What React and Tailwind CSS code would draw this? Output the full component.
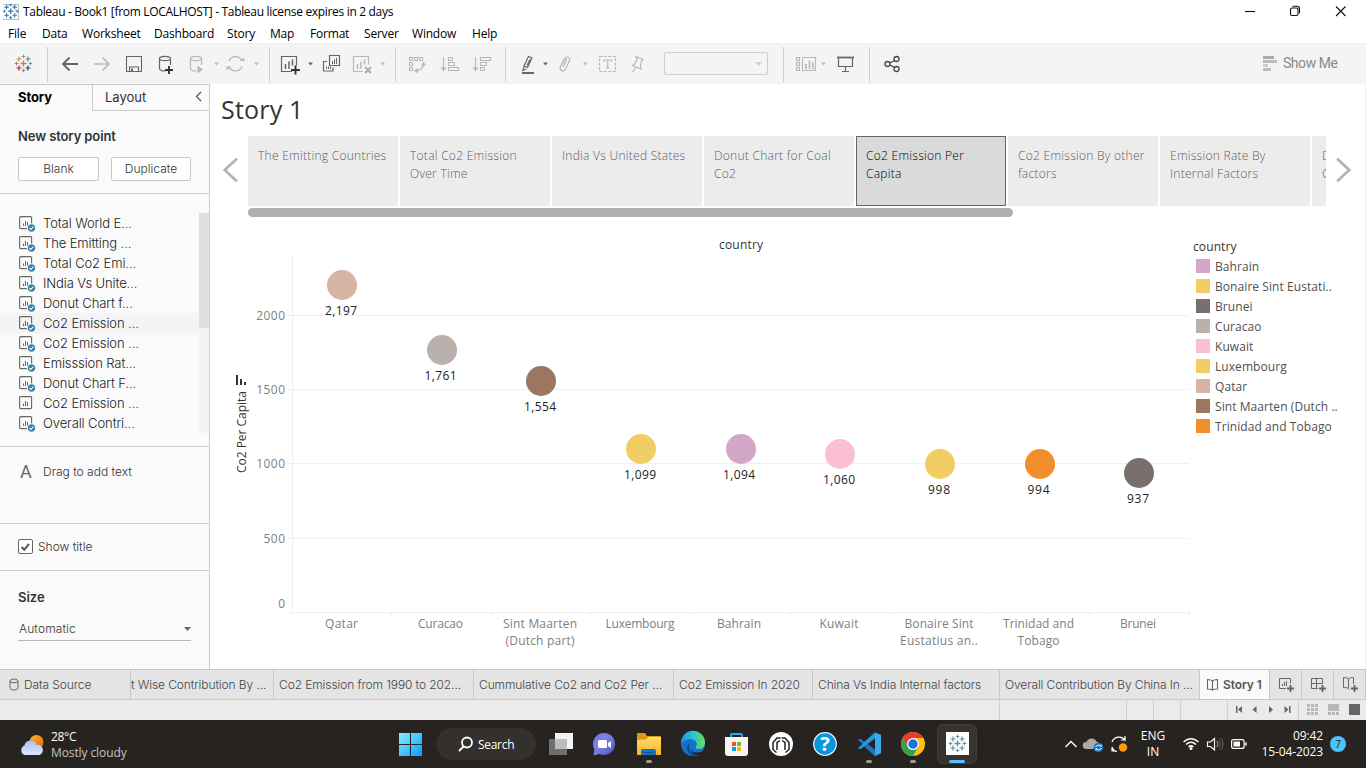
import React from "react";

const G = "#666666";
const L = "#b8b8b8";

/* Toolbar icons share one coordinate system; each cell shows its own slice of it. */
function Cell({ x, to, children }) {
  return (
    <svg className="shrink-0" width={to - x} height="41" viewBox={`${x} 43 ${to - x} 41`} fill="none">
      {children}
    </svg>
  );
}
const Caret = ({ x, c = L }) => <path d={`M${x - 2.5} 62.5h5l-2.5 3z`} fill={c} />;
const Divider = ({ x }) => <path d={`M${x + 0.5} 47v35`} stroke="#cfcfcf" />;

const LOGO = [
  [23.5, 63.5, 3, "#e8762c", 1.4],
  [19, 59, 2.5, "#eb912c", 1.2],
  [28, 59, 2.5, "#59879b", 1.2],
  [19, 68, 2.5, "#c72037", 1.2],
  [28, 68, 2.5, "#1f457e", 1.2],
  [23.5, 56.5, 1.8, "#7099a6", 1],
  [23.5, 70.5, 1.8, "#7b86b0", 1],
  [16.5, 63.5, 1.8, "#7b86b0", 1],
  [30.5, 63.5, 1.8, "#7099a6", 1],
];
function TableauMark({ mono }) {
  return LOGO.map(([x, y, r, c, w], i) => (
    <path key={i} d={`M${x - r} ${y}h${2 * r}M${x} ${y - r}v${2 * r}`} stroke={mono || c} strokeWidth={w} />
  ));
}

function TitleBar() {
  return (
    <div className="flex h-[23px] items-center bg-white pl-[3px] text-[12px] text-black">
      <svg width="16" height="16" viewBox="0 0 16 16">
        <path d="M0 .5h15.500v15H0" fill="#fff" stroke="#bdbdbd" />
        <g transform="translate(-13.700 -50.600) scale(.91)"><TableauMark mono="#2f7ea8" /></g>
      </svg>
      <span className="ml-1 w-[1200px] whitespace-nowrap font-['Open_Sans',sans-serif] tracking-[-0.32px]">
        Tableau - Book1 [from LOCALHOST] - Tableau license expires in 2 days
      </span>
      <svg className="ml-[22px] shrink-0" width="105" height="20" viewBox="1245 1 105 20" fill="none" stroke="#111" strokeWidth="1.1">
        <path d="M1245 10.500h10" />
        <rect x="1290.500" y="7" width="7.500" height="7.500" rx="1.500" />
        <path d="M1292.500 5.200h4.800q2.200 0 2.200 2.200v4.800M1336 5.500l9.500 9.500M1345.500 5.500l-9.500 9.500" />
      </svg>
    </div>
  );
}

const MENU = [
  ["File", "w-[34px]"], ["Data", "w-[40px]"], ["Worksheet", "w-[72px]"], ["Dashboard", "w-[73px]"], ["Story", "w-[43px]"],
  ["Map", "w-[40px]"], ["Format", "w-[54px]"], ["Server", "w-[48px]"], ["Window", "w-[60px]"], ["Help", "w-[40px]"],
];
function MenuBar() {
  return (
    <div className="flex h-5 items-center bg-white pt-0.5 pl-2 font-['Open_Sans',sans-serif] text-[12px] tracking-[-0.2px] text-black">
      {MENU.map(([m, w]) => <span key={m} className={`${w} shrink-0 whitespace-nowrap`}>{m}</span>)}
    </div>
  );
}

const Cyl = ({ x, c }) => (
  <path d={`M${x} 58.500v10q0 2.500 6 2.500M${x + 11} 65v-6.500M${x} 58.500q0-2.200 5.500-2.200t5.500 2.200q0 2.200-5.500 2.200t-5.500-2.200`} stroke={c} strokeWidth="1.200" />
);

function Toolbar() {
  return (
    <div className="flex h-[41px] border-t border-[#efefef] bg-[#f4f4f4]">
      <div className="-mt-px flex">
        <Cell x={0} to={47}><TableauMark /></Cell>
        <Cell x={47} to={54}><Divider x={47} /></Cell>
        <Cell x={54} to={86}><path d="M78 64H63M69.500 57.500L63 64l6.500 6.500" stroke={G} strokeWidth="1.800" /></Cell>
        <Cell x={86} to={118}><path d="M94 64h15M102.500 57.500L109 64l-6.500 6.500" stroke={L} strokeWidth="1.600" /></Cell>
        <Cell x={118} to={150}>
          <path d="M126.500 56.500h15v15h-15zM129.500 71.500v-4.500h9v4.500" stroke={G} strokeWidth="1.100" />
          <path d="M131 68.500h2v3h-2z" fill={G} />
        </Cell>
        <Cell x={150} to={182}><Cyl x={159.500} c={G} /><path d="M165 70h8M169 66v8" stroke="#333" strokeWidth="1.900" /></Cell>
        <Cell x={182} to={210}><Cyl x={190.500} c={L} /><path d="M197.500 65.500v8l5.500-4z" fill={L} /></Cell>
        <Cell x={210} to={224}><Caret x={216.500} /></Cell>
        <Cell x={224} to={250}>
          <path d="M229 61a7 7 0 0 1 13 0M242 66.500a7 7 0 0 1-13 0" stroke={L} strokeWidth="1.400" />
          <path d="M239.500 61h5v-3.500zM226.500 66.500h5l-5 4z" fill={L} />
        </Cell>
        <Cell x={250} to={264}><Caret x={256.500} /></Cell>
        <Cell x={264} to={275}><Divider x={269} /></Cell>
        <Cell x={275} to={305}>
          <path d="M292 71.500h-10.500v-15h15v9" stroke={G} strokeWidth="1.200" />
          <path d="M285.500 64v5M289 61.500v7.500M292.500 59.500v6" stroke={G} strokeWidth="1.500" />
          <path d="M291 70h9M295.500 65.500v9" stroke="#333" strokeWidth="1.900" />
        </Cell>
        <Cell x={305} to={316}><Caret x={310.500} c={G} /></Cell>
        <Cell x={316} to={347}>
          <path d="M329.500 55.500h10v10h-10zM327 61.500h-3.500v9.500h9.500v-3.500" stroke={G} strokeWidth="1.200" />
          <path d="M332.500 61v3M334.500 59.500v4.500M336.500 58v6M326.500 66.500v2.500M328.500 66.500v2.500M330.500 66.500v2.500" stroke={G} />
        </Cell>
        <Cell x={347} to={376}>
          <path d="M363 71.500h-9.500v-15h15v8" stroke={L} strokeWidth="1.200" />
          <path d="M357.500 64v5M361 61.500v7.500M364.500 59.500v5" stroke={L} strokeWidth="1.500" />
          <path d="M365 67l6 6M371 67l-6 6" stroke="#aaa" strokeWidth="1.900" />
        </Cell>
        <Cell x={376} to={390}><Caret x={382.500} /></Cell>
        <Cell x={390} to={402}><Divider x={395} /></Cell>
        <Cell x={402} to={433}>
          <g stroke={L} strokeWidth="1.100"><path d="M409.500 57.500h3v3h-3zM414.500 57.500h3v3h-3zM419.500 57.500h3v3h-3zM409.500 62.500h3v3h-3zM409.500 67.500h3v3h-3z" /><path d="M416 71q7-1 7.500-7" strokeWidth="1.400" /></g>
          <path d="M423.500 61.500l2.500 4h-5zM414 70.700l4-2.700v5.400z" fill={L} />
        </Cell>
        <Cell x={433} to={466}>
          <path d="M443.500 57v13M448.500 57.500h4v3h-4zM448.500 62.500h6v3h-6zM448.500 67.500h10v3h-10z" stroke={L} strokeWidth="1.100" /><path d="M440.500 67.500h6l-3 4z" fill={L} />
        </Cell>
        <Cell x={466} to={499}>
          <path d="M475.500 57v13M480.500 57.500h10v3h-10zM480.500 62.500h6v3h-6zM480.500 67.500h4v3h-4z" stroke={L} strokeWidth="1.100" /><path d="M472.500 67.500h6l-3 4z" fill={L} />
        </Cell>
        <Cell x={499} to={514}><Divider x={505} /></Cell>
        <Cell x={514} to={540}>
          <path d="M528.500 56.500l3.500 1.500-4.500 9.500-3.500-1.500zM524 66.500l-1.200 4 3.500-1.500M530 59.500l-3 6" stroke={G} strokeWidth="1.200" />
          <path d="M522 72h12v2h-12z" fill={G} />
        </Cell>
        <Cell x={540} to={552}><Caret x={545.500} c={G} /></Cell>
        <Cell x={552} to={579}>
          <path d="M562 64.500l3-6q1-2 3-1.300 2.500 1 1.500 3.300l-4 8.500q-1.300 2.600-3.800 1.600-2.400-1-1.400-3.600l3.700-7.500q.7-1.200 1.700-.7t.5 1.700l-3.200 6.500" stroke={L} strokeWidth="1.200" />
        </Cell>
        <Cell x={579} to={592}><Caret x={585.500} /></Cell>
        <Cell x={592} to={624}>
          <path d="M599.500 56.500h16v15h-16z" stroke={L} strokeDasharray="3 1.400" strokeWidth="1.200" />
          <path d="M604 62v-2h7.500v2M607.700 60v8M605.700 68h4" stroke={L} strokeWidth="1.200" />
        </Cell>
        <Cell x={624} to={656}>
          <path d="M636 56.500l7 3-1.500 1.500-1 5 .5 3-8.500-3.500 2.500-2 2-4zM636.500 67l-4 5" stroke={L} strokeWidth="1.200" />
        </Cell>
      </div>
      <div className="mt-2 ml-2 flex h-[23px] w-[104px] shrink-0 items-center justify-end rounded-xs border border-[#cfcfcf] pr-[5px]">
        <svg width="7" height="4" viewBox="0 0 7 4"><path d="M0 0h7L3.500 4z" fill="#cfcfcf" /></svg>
      </div>
      <div className="-mt-px ml-2 flex">
        <Cell x={776} to={790}><Divider x={783} /></Cell>
        <Cell x={790} to={819}>
          <path d="M796.500 57.500h3v3h-3zM796.500 62.500h3v3h-3zM796.500 67.500h3v3h-3zM802.500 57.500h13v13h-13z" stroke={L} strokeWidth="1.100" />
          <path d="M806 64v5M809.500 60.500v8.500M813 62.500v6.500" stroke={L} strokeWidth="1.700" />
        </Cell>
        <Cell x={819} to={831}><Caret x={823.500} /></Cell>
        <Cell x={831} to={862}>
          <path d="M837 57.500h17" stroke={G} strokeWidth="1.800" /><path d="M838.500 58v8.500h14V58M845.500 67v4.500M842 71.500h7" stroke={G} strokeWidth="1.200" />
        </Cell>
        <Cell x={862} to={877}><Divider x={869} /></Cell>
        <Cell x={877} to={908}>
          <g stroke="#444" strokeWidth="1.300"><circle cx="887.500" cy="64" r="2.500" /><circle cx="896.500" cy="59" r="2.500" /><circle cx="896.500" cy="69" r="2.500" /><path d="M890 63l4.500-2.500M890 65l4.500 2.500" /></g>
        </Cell>
      </div>
      <div className="mb-px ml-auto flex items-center pr-[28px] font-['Roboto',sans-serif] text-[14px] tracking-[-0.45px] text-[#8a8a8a]">
        <svg className="mr-1.5" width="14" height="15"><path d="M0 0h11v3H0z" fill="#aaa" /><path d="M0 4h14v3H0zM0 12h8v3H0z" fill="#bcbcbc" /><path d="M0 8h5v3H0z" fill="#d0d0d0" /></svg>
        <span className="w-[55px] whitespace-nowrap">Show Me</span>
      </div>
    </div>
  );
}

function SheetIcon({ done }) {
  return (
    <svg className="mr-2 shrink-0" width="17" height="17" fill="none">
      <rect x=".6" y="1.600" width="12" height="12" rx="1" stroke="#666" strokeWidth="1.100" />
      <path d="M4.500 8.500V11M6.500 6v5M8.500 7v4" stroke="#666" />
      {done && <><circle cx="12.500" cy="13" r="4.200" fill="#3580a3" stroke="#fafafa" /><path d="M10.500 13l1.500 1.500 2.500-3" stroke="#fff" strokeWidth="1.100" /></>}
    </svg>
  );
}
const SHEETS = [
  "Total World E...", "The Emitting ...", "Total Co2 Emi...", "INdia Vs Unite...", "Donut Chart f...", "Co2 Emission ...",
  "Co2 Emission ...", "Emisssion Rat...", "Donut Chart F...", "Co2 Emission ...", "Overall Contri...",
];

function SidePanel() {
  return (
    <aside className="flex w-[210px] shrink-0 flex-col border-t border-r border-[#cccccc] bg-[#fafafa] font-['Inter',sans-serif] text-[#4a4a4a]">
      <div className="flex h-[26px] shrink-0">
        <div className="w-[92px] pt-[2px] pl-[18px] text-[13px] leading-[21px] font-bold tracking-[-0.1px] text-black">Story</div>
        <div className="flex flex-1 items-start border-b border-l border-[#cccccc] pt-[2px] pl-3 text-[13px] leading-[21px] text-[#333]">
          Layout
          <svg className="mt-1 mr-[7px] ml-auto" width="7" height="11"><path d="M6 1L1.500 5.500 6 10" fill="none" stroke="#555" strokeWidth="1.200" /></svg>
        </div>
      </div>
      <div className="h-[83px] shrink-0 border-b border-[#cccccc] px-[18px] pt-[15px]">
        <div className="text-[13px] leading-5 font-semibold tracking-[-0.1px] text-[#333]">New story point</div>
        <div className="mt-[11px] flex gap-3 text-center text-[12px] leading-[21px] font-light text-[#333]">
          <div className="h-6 w-[81px] rounded-xs border border-[#c8c8c8] bg-white">Blank</div>
          <div className="h-6 w-20 rounded-xs border border-[#c8c8c8] bg-white">Duplicate</div>
        </div>
      </div>
      <div className="flex h-[253px] shrink-0 border-b border-[#cccccc] pt-[19px]">
        <div className="w-[199px] text-[13px] leading-5 font-light tracking-[-0.1px] text-[#222]">
          {SHEETS.map((s, i) => (
            <div key={i} className={`flex h-5 items-center pl-[19px] ${i === 5 ? "bg-[#f4f4f4]" : ""}`}>
              <SheetIcon done={i !== 9} /><span className="-ml-px whitespace-nowrap">{s}</span>
            </div>
          ))}
        </div>
        <div className="h-[220px] w-[10px] bg-[#f4f4f4]"><div className="h-[115px] bg-[#e0e0e0]" /></div>
      </div>
      <div className="flex h-[77px] shrink-0 border-b border-[#cccccc] pt-[15px] pl-5 leading-5">
        <span className="w-[23px] font-['Roboto',sans-serif] text-[18px] text-[#666]">A</span>
        <span className="text-[12px] font-light text-[#333]">Drag to add text</span>
      </div>
      <div className="flex h-[47px] shrink-0 items-center border-b border-[#cccccc] pb-px pl-[18px] text-[12px] font-light text-[#333]">
        <svg width="15" height="15" fill="none"><rect x=".5" y=".5" width="14" height="14" rx="1.500" fill="#fff" stroke="#666" /><path d="M3.500 8l2.800 2.800 4.700-6" stroke="#555" strokeWidth="2" /></svg>
        <span className="ml-[5px]">Show title</span>
      </div>
      <div className="px-[18px] pt-4">
        <div className="text-[13px] leading-5 font-semibold text-[#333]">Size</div>
        <div className="mt-[11px] flex h-[23px] items-center border-b border-[#b8b8b8] pl-px text-[12px] font-light tracking-[0.1px] text-[#333]">
          Automatic<svg className="ml-auto" width="7" height="4"><path d="M0 0h7L3.500 4z" fill="#666" /></svg>
        </div>
      </div>
    </aside>
  );
}

const POINTS = [
  "The Emitting Countries", "Total Co2 Emission Over Time", "India Vs United States", "Donut Chart for Coal Co2",
  "Co2 Emission Per Capita", "Co2 Emission By other factors", "Emission Rate By Internal Factors", "Donut Chart For Countries",
];

function Chevron({ flip }) {
  return (
    <svg className={`mt-[22px] shrink-0 ${flip ? "rotate-180" : ""}`} width="15" height="24" viewBox="0 0 15 24">
      <path d="M13 1.500L1.700 12 13 22.500" fill="none" stroke="#b3b3b3" strokeWidth="2.800" strokeLinecap="round" />
    </svg>
  );
}

function Navigator() {
  return (
    <div className="flex h-[81px] shrink-0 pl-[13px]">
      <Chevron />
      <div className="ml-[10px] w-[1078px] overflow-hidden">
        <div className="flex gap-0.5">
          {POINTS.map((p, i) => (
            <div key={p} className={`h-[70px] w-[150px] shrink-0 border pt-[10px] pr-1.5 pl-[9px] text-[12px] leading-[18px] font-light tracking-[0.27px] ${i === 4 ? "border-[#666] bg-[#dadada] text-black" : "border-[#ececec] bg-[#ececec] text-[#5c5c5c]"}`}>{p}</div>
          ))}
        </div>
        <div className="mt-0.5 h-[9px] w-[765px] rounded-full bg-[#b0b0b0]" />
      </div>
      <div className="ml-[10px]"><Chevron flip /></div>
    </div>
  );
}

const MARKS = [
  [342, 285, "#d7b5a6", "2,197", 341, ["Qatar", 33]],
  [442, 350, "#bab0ac", "1,761", 440.5, ["Curacao", 45]],
  [541, 381, "#9d7660", "1,554", 540, ["Sint Maarten", 74], ["(Dutch part)", 69]],
  [641, 449, "#f1ce63", "1,099", 640, ["Luxembourg", 69]],
  [741, 449, "#d4a6c8", "1,094", 739, ["Bahrain", 44]],
  [840, 454, "#fabfd2", "1,060", 839, ["Kuwait", 39]],
  [940, 464, "#f1ce63", "998", 939, ["Bonaire Sint", 69], ["Eustatius an..", 78]],
  [1040, 464, "#f28e2b", "994", 1038.5, ["Trinidad and", 71], ["Tobago", 42]],
  [1139, 473, "#79706e", "937", 1138, ["Brunei", 36]],
];
const GRID = [[315, "2000"], [389, "1500"], [463, "1000"], [538, "500"], [612, "0"]];

function Chart() {
  return (
    <svg width="980" height="452" viewBox="210 217 980 452" className="shrink-0 text-[12px]">
      {GRID.map(([y, v]) => (
        <g key={v}>
          <path d={`M287 ${y + 0.5}H1189`} stroke="#f0f0f0" />
          <text x="285" y={v === "0" ? 608 : y + 5} textAnchor="end" textLength={v.length * 7.2} fill="#808080">{v}</text>
        </g>
      ))}
      <path d="M292.500 254v361" stroke="#f0f0f0" />
      {MARKS.map((m, i) => <path key={i} d={`M${Math.floor(391.500 + i * 99.700)}.5 612v3`} stroke="#e8e8e8" />)}
      <text x="741" y="249" textAnchor="middle" textLength="44" fill="#333">country</text>
      {MARKS.map(([x, y, c, v, lx, ...names], i) => (
        <g key={i}>
          <circle cx={x} cy={y} r="15" fill={c} />
          <text x={lx} y={y + 30} textAnchor="middle" textLength={v.length > 3 ? 32 : 22} fill="#222">{v}</text>
          {names.map(([n, w], j) => <text key={n} x={lx + (i === 0 ? 0.5 : 0)} y={628 + 17 * j} textAnchor="middle" textLength={w} fill="#808080">{n}</text>)}
        </g>
      ))}
      <text transform="translate(246 432) rotate(-90)" textAnchor="middle" textLength="82" fill="#333">Co2 Per Capita</text>
      <path d="M236 375h2v10h-2zM240 379h2v6h-2zM244 382h2v3h-2z" fill="#333" />
    </svg>
  );
}

const LEGEND = [
  ["Bahrain", "bg-[#d4a6c8]"], ["Bonaire Sint Eustati..", "bg-[#f1ce63]"], ["Brunei", "bg-[#79706e]"], ["Curacao", "bg-[#bab0ac]"],
  ["Kuwait", "bg-[#fabfd2]"], ["Luxembourg", "bg-[#f1ce63]"], ["Qatar", "bg-[#d7b5a6]"], ["Sint Maarten (Dutch ..", "bg-[#9d7660]"],
  ["Trinidad and Tobago", "bg-[#f28e2b]"],
];

function Story() {
  return (
    <main className="flex min-w-0 flex-1 flex-col border-r border-[#f0f0f0] bg-white font-['Open_Sans',sans-serif]">
      <h1 className="h-[52px] shrink-0 pt-[8px] pl-[11px] text-[25px] leading-[34px] tracking-[0.2px] text-[#333]">Story 1</h1>
      <Navigator />
      <div className="flex">
        <Chart />
        <div className="w-[170px] pt-5 pl-[3px] text-[12px] leading-5 tracking-[0.07px] text-[#505050]">
          <div className="tracking-[0.1px] text-[#333]">country</div>
          {LEGEND.map(([n, c]) => (
            <div key={n} className="flex h-5 items-center pl-[3px] whitespace-nowrap">
              <span className={`mr-[5px] -mt-[2px] h-3.5 w-3.5 shrink-0 ${c}`} />{n}
            </div>
          ))}
        </div>
      </div>
    </main>
  );
}

const TABS = [
  ["t Wise Contribution By ...", "w-[143px] pl-0"], ["Co2 Emission from 1990 to 202...", "w-[200px] pl-[5px]"],
  ["Cummulative Co2 and Co2 Per ...", "w-[200px] pl-[5px]"], ["Co2 Emission In 2020", "w-[139px] pl-[5px]"],
  ["China Vs India Internal factors", "w-[187px] pl-[5px]"], ["Overall Contribution By China In ...", "w-[200px] pl-[5px]"],
];
const Book = () => <path d="M.500 1.500q3.500 0 5 1.500 1.500-1.500 5-1.500v9.500q-3.500 0-5 1-1.500-1-5-1zM5.500 3v9" fill="none" stroke="#666" strokeWidth="1.100" />;
const Plus = () => <path d="M8 12.500h7M11.500 9v7" stroke="#666" strokeWidth="1.800" />;

function Tabs() {
  return (
    <div className="flex h-[31px] shrink-0 border-y border-[#c8c8c8] bg-[#e4e4e4] font-['Inter',sans-serif] text-[12px] leading-[29px] font-light tracking-[-0.1px] text-[#444]">
      <div className="flex w-[130px] shrink-0 items-center pl-[9px]">
        <svg className="mr-[5px]" width="10" height="13" fill="none" stroke="#666"><path d="M1 3v7q0 2 4 2t4-2V3M1 3q0-2 4-2t4 2q0 1.800-4 1.800T1 3" /></svg>Data Source
      </div>
      {TABS.map(([t, c]) => <div key={t} className={`shrink-0 overflow-hidden border-l border-[#c8c8c8] whitespace-nowrap ${c}`}>{t}</div>)}
      <div className="flex w-[70px] shrink-0 items-center border-l border-[#c8c8c8] bg-[#fafafa] pl-[7px] font-semibold whitespace-nowrap text-[#555]">
        <svg className="mr-1 shrink-0" width="12" height="14"><Book /></svg>Story 1
      </div>
      <div className="flex w-8 items-center border-l border-[#c8c8c8] pl-[9px]">
        <svg width="16" height="18" fill="none"><path d="M7 12.500H.5V2.500h11v5M3.500 8v2M5.500 6v4M7.500 5v5" stroke="#666" /><Plus /></svg>
      </div>
      <div className="flex w-8 items-center border-l border-[#c8c8c8] pl-[9px]">
        <svg width="16" height="18" fill="none"><path d="M7 12.500H.5V2.500h11v5M.5 7.500h11M5.500 2.500v10" stroke="#666" /><Plus /></svg>
      </div>
      <div className="flex flex-1 items-center border-x border-[#c8c8c8] pl-[9px]">
        <svg width="16" height="18" fill="none"><path d="M6.500 13.500q-.5-1-1-1-1-1-5-1v-10q4 0 5 1.500 1-1.500 5-1.500v6.500M5.500 3v9" stroke="#666" /><Plus /></svg>
      </div>
    </div>
  );
}

function StatusBar() {
  return (
    <div className="flex h-5 shrink-0 bg-[#ebebeb]">
      <div className="w-[999px] shrink-0" />
      <div className="w-[127px] border-l border-[#d0d0d0]" />
      <div className="w-[27px] border-l border-[#d0d0d0]" />
      <div className="w-[27px] border-l border-[#d0d0d0]" />
      <div className="w-[47px] border-l border-[#d0d0d0]" />
      <div className="w-[71px] border-l border-[#d0d0d0] pt-[5px] pl-2">
        <svg width="56" height="9" fill="#666"><path d="M0 1h1.500v7H0zM6 1v7L2 4.500zM20.500 1v7l-4-3.500zM33 1v7l4-3.500zM48.500 1v7l4-3.500zM53 1h1.500v7H53z" /></svg>
      </div>
      <div className="flex-1 border-l border-[#d0d0d0] pt-1 pl-2">
        <svg width="54" height="11" fill="#b8b8b8">
          <path d="M0 0h3v3H0zM4 0h3v3H4zM8 0h3v3H8zM0 4h3v3H0zM4 4h3v3H4zM8 4h3v3H8zM0 8h3v3H0zM4 8h3v3H4zM8 8h3v3H8zM21 0h11v7H21zM21 8h3v3h-3zM25 8h3v3h-3zM29 8h3v3h-3z" />
          <path d="M42 0h11v11H42z" fill="#666" />
        </svg>
      </div>
    </div>
  );
}

function Taskbar() {
  return (
    <div className="flex h-12 shrink-0 bg-[#272320] font-['Open_Sans',sans-serif] text-[12px] text-white">
      <svg className="mt-[13px] ml-5 shrink-0" width="25" height="24">
        <defs>
          <linearGradient id="cloud" x2="0" y2="1"><stop stopColor="#a9c1f2" /><stop offset="1" stopColor="#e0e8fa" /></linearGradient>
          <linearGradient id="sun" x2="1" y2="1"><stop stopColor="#fbb62a" /><stop offset="1" stopColor="#ee5f10" /></linearGradient>
        </defs>
        <circle cx="16.500" cy="9" r="7" fill="url(#sun)" />
        <path d="M5 22a5 5 0 0 1-.5-9.500 6.200 6.200 0 0 1 12-.5A5 5 0 1 1 19 22z" fill="url(#cloud)" />
      </svg>
      <div className="mt-[9px] ml-[6px] w-[346px] shrink-0 leading-4 tracking-[-0.1px]"><div className="tracking-[-0.3px]">28°C</div><div className="text-[#c4c4c4]">Mostly cloudy</div></div>
      <svg className="mt-3 ml-0.5 shrink-0" width="24" height="24">
        <defs><linearGradient id="win" x1="0" y1="0" x2="24" y2="24" gradientUnits="userSpaceOnUse"><stop stopColor="#84f2ff" /><stop offset="1" stopColor="#069cff" /></linearGradient></defs>
        <path d="M0 1h11v11H0zM12 1h11v11H12zM0 13h11v11H0zM12 13h11v11H12z" fill="url(#win)" />
      </svg>
      <div className="mt-2 ml-[13px] flex h-8 w-[100px] shrink-0 items-center rounded-full bg-[#34302d] pl-[22px]">
        <svg width="16" height="16" fill="none" stroke="#fff" strokeWidth="1.800"><circle cx="9" cy="6.500" r="5" /><path d="M5.500 10.500L1.500 14.500" strokeLinecap="round" /></svg>
        <span className="ml-[4px] pt-0.5 tracking-[-0.3px]">Search</span>
      </div>
      <svg className="shrink-0" width="401" height="48" viewBox="536 720 401 48">
        <defs>
          <linearGradient id="chat" x1="0" y1="0" x2="1" y2="1"><stop stopColor="#7775d8" /><stop offset=".4" stopColor="#7b83eb" /><stop offset="1" stopColor="#4f50b5" /></linearGradient>
          <linearGradient id="edge" x2="1"><stop stopColor="#2494dc" /><stop offset=".5" stopColor="#2cc2d4" /><stop offset="1" stopColor="#6be04f" /></linearGradient>
          <linearGradient id="folder" x2="0" y2="1"><stop stopColor="#ffdc73" /><stop offset="1" stopColor="#f6b51e" /></linearGradient>
        </defs>
        <path d="M555 733h18v16h-18z" fill="#f3f3f3" /><path d="M549 739h18v16h-18z" fill="#6f6f6f" /><path d="M555 739h12v10h-12z" fill="#bdbdbd" />
        <path d="M604.500 733a11 11 0 1 1-5 21l-6 1.500 1-6a11 11 0 0 1 10-16.500z" fill="url(#chat)" /><rect x="598" y="740" width="9" height="8" rx="1.500" fill="#fff" /><path d="M608 743l3-2v7l-3-2z" fill="#fff" />
        <path d="M637 734q0-1 1-1h7l2 3h13q1 0 1 1v5h-24z" fill="#e09a0c" /><path d="M637 740l9-.5 2.500-2.500H661v18h-24z" fill="url(#folder)" /><path d="M641 755v-4q0-2 2-2h11q2 0 2 2v4z" fill="#1373c4" /><path d="M644 752.500h9" stroke="#0b4f91" />
        <circle cx="693" cy="744" r="12" fill="#1670c4" />
        <path d="M681 743a12 12 0 0 1 24-.5c0 5-4 7-7.500 6.500-2.500-.5-2-2-1-3.500 1-2-.5-5-4-6-4-1-9 1-11.500 3.500z" fill="url(#edge)" />
        <path d="M690 743c-3 5 1 11 7 11 2 0 4-.5 6-2-3 5-10 6-14 1-3-4-2-8 1-10z" fill="#0c468c" />
        <path d="M691 749c1 3 5 5 12 2l1.500 1.500c-4 4-11 4-13.500-3.500z" fill="#272320" />
        <path d="M731 740v-5q0-1 1-1h9q1 0 1 1v5" fill="none" stroke="#28a6ee" strokeWidth="2" /><path d="M725 737h23v16q0 3-3 3h-17q-3 0-3-3z" fill="#f5f5f5" />
        <path d="M732 742h4v4h-4z" fill="#f25022" /><path d="M737 742h4v4h-4z" fill="#7fba00" /><path d="M732 747h4v4h-4z" fill="#00a4ef" /><path d="M737 747h4v4h-4z" fill="#ffb900" />
        <circle cx="781" cy="744" r="12" fill="#fff" /><path d="M776.500 752.500l-3.500-3v-7l4-4.500h3.500M785.500 752.500l3.500-3v-7l-4-4.500h-3.500M777 750v-7.500l3-2M785 750v-7.500l-3-2" fill="none" stroke="#222" strokeWidth="1.500" />
        <circle cx="825" cy="744" r="11.300" fill="#0695df" stroke="#e9f5fc" strokeWidth="1.200" />
        <text x="825" y="751" textAnchor="middle" fill="#fff" className="text-[20px] font-bold">?</text>
        <path d="M875 732.500l6 2.500v18l-6 3L862 744z" fill="#2495df" /><path d="M875 738l-8 6 8 6.500z" fill="#272320" /><path d="M858 740l2-1.500 15 11v6.500z" fill="#1b76bf" /><path d="M858 748l2 1.500 15-11v-6z" fill="#2495df" /><path d="M875 732.500l6 2.500v18l-6 3z" fill="#38a9ee" />
        <circle cx="913" cy="744" r="12" fill="#fbc116" />
        <path d="M902.600 738A12 12 0 0 1 923.400 738H913l-5.200 9z" fill="#e63b2e" />
        <path d="M902.600 738A12 12 0 0 0 913 756l5.200-9h-10.400z" fill="#31a350" />
        <circle cx="913" cy="744" r="6" fill="#fff" /><circle cx="913" cy="744" r="4.700" fill="#1b73e8" />
        <path d="M647.500 761.500h3M867.500 761.500h3M911.500 761.500h3" stroke="#9c9997" strokeWidth="3" strokeLinecap="round" />
      </svg>
      <div className="mt-1 flex h-10 w-10 shrink-0 flex-col items-center rounded-md border border-[#413d3a] bg-[#37332f] pt-[7px]">
        <svg width="23" height="23" viewBox="12 52 23 23"><path d="M12 52h23v23H12z" fill="#fff" /><TableauMark mono="#638da8" /></svg>
        <div className="mt-[5px] h-[3px] w-4 rounded-full bg-[#55bfff]" />
      </div>
      <svg className="ml-[87px] shrink-0" width="66" height="48" viewBox="1064 720 66 48" fill="none">
        <path d="M1065.500 747l5.500-5.500 5.500 5.500" stroke="#fff" strokeWidth="1.400" />
        <path d="M1086 749a3.500 3.500 0 0 1 .5-7 5.500 5.500 0 0 1 10-.5q2.500.5 2.500 3l-6 4.500z" fill="#aaa" />
        <circle cx="1098.500" cy="747.500" r="4.800" fill="#1671c8" /><path d="M1095.500 746.500q3-3 5.500 0v-2M1101.500 748.500q-3 3-5.500 0v2" stroke="#fff" />
        <path d="M1112 742a7.500 7.500 0 0 1 13-2v-4M1125 740h-4M1112 747v4h4M1112 747q1 4 5 4.500" stroke="#fff" strokeWidth="1.200" /><circle cx="1123" cy="747.500" r="4.200" fill="#ff9a09" />
      </svg>
      <div className="mt-2 ml-[5px] w-[36px] shrink-0 text-center leading-4">ENG<br />IN</div>
      <svg className="ml-[11px] shrink-0" width="66" height="48" viewBox="1182 720 66 48" fill="none">
        <g stroke="#fff" strokeWidth="1.500"><path d="M1183.500 742q7.500-6.500 15 0M1186 744.500q5-4.500 10 0M1188.500 747q2.500-2.200 5 0" /></g><circle cx="1191" cy="748.500" r="1.500" fill="#fff" />
        <path d="M1207.500 742h3l4-3.500v11.500l-4-3.500h-3z" stroke="#fff" strokeWidth="1.200" /><path d="M1217 741q2 3 0 6" stroke="#aaa" /><path d="M1219 739.500q3 4.500 0 9M1221 738q4 6 0 12" stroke="#66625f" />
        <rect x="1231.600" y="739.600" width="12.500" height="8.800" rx="2" stroke="#fff" strokeWidth="1.200" /><path d="M1233.500 741.500h6.500v5h-6.500z" fill="#fff" /><path d="M1246 742.500v3" stroke="#fff" strokeWidth="1.500" />
      </svg>
      <div className="mt-2 w-[75px] shrink-0 text-right leading-4 tracking-[-0.1px]">09:42<br />15-04-2023</div>
      <div className="mt-4 ml-[7px] h-4 w-4 shrink-0 rounded-full bg-[#4cc2ff] text-center text-[10px] leading-4 text-[#222]">7</div>
    </div>
  );
}

export default function App() {
  return (
    <div className="flex h-[768px] w-[1366px] flex-col overflow-hidden bg-white">
      <TitleBar />
      <MenuBar />
      <Toolbar />
      <div className="flex h-[585px] shrink-0"><SidePanel /><Story /></div>
      <Tabs />
      <StatusBar />
      <Taskbar />
    </div>
  );
}
